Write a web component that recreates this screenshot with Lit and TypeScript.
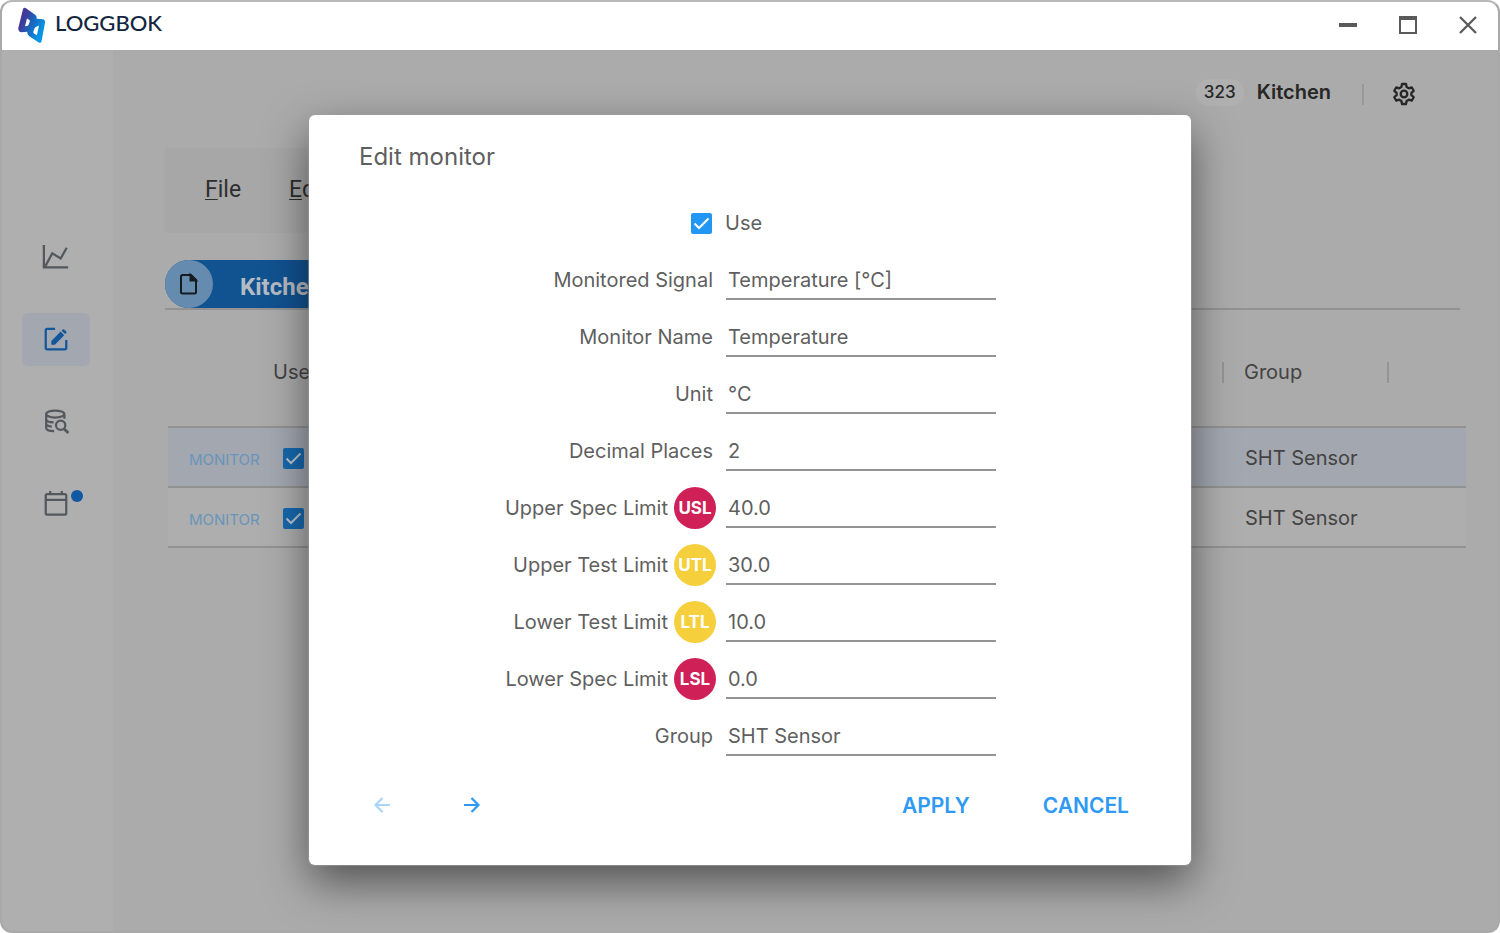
import { LitElement, html, css, svg, nothing } from "lit";
import { customElement, property } from "lit/decorators.js";

interface Field {
  id: string;
  label: string;
  value: string;
  badge?: string;
  tone?: "spec" | "test";
}

const FIELDS: Field[] = [
  { id: "signal", label: "Monitored Signal", value: "Temperature [°C]" },
  { id: "name", label: "Monitor Name", value: "Temperature" },
  { id: "unit", label: "Unit", value: "°C" },
  { id: "decimals", label: "Decimal Places", value: "2" },
  { id: "usl", label: "Upper Spec Limit", value: "40.0", badge: "USL", tone: "spec" },
  { id: "utl", label: "Upper Test Limit", value: "30.0", badge: "UTL", tone: "test" },
  { id: "ltl", label: "Lower Test Limit", value: "10.0", badge: "LTL", tone: "test" },
  { id: "lsl", label: "Lower Spec Limit", value: "0.0", badge: "LSL", tone: "spec" },
  { id: "group", label: "Group", value: "SHT Sensor" },
];

const ROWS = [
  { action: "MONITOR", group: "SHT Sensor", selected: true },
  { action: "MONITOR", group: "SHT Sensor", selected: false },
];

const icons = {
  chart: svg`<path d="M2 1v24h26M3.500 24l7.500-14 9 5.500L26.500 4" />`,
  edit: svg`<path d="M14 3H5.500A1.500 1.500 0 0 0 4 4.500v19A1.500 1.500 0 0 0 5.500 25h19a1.500 1.500 0 0 0 1.500-1.500V15" />
    <path class="solid" d="M10 20v-4L20 6l3.800 3.800L13.800 20zM21 5l1.300-1.300a1 1 0 0 1 1.400 0l2.300 2.300a1 1 0 0 1 0 1.400l-1.300 1.300z" />`,
  search: svg`<path d="M24 11.500V7M4.500 7v14.500c0 1.900 3.500 3.300 8.500 3.400M4.500 12c0 1.800 3.500 3.200 8 3.400M4.500 17c0 1.500 2.500 2.600 6 3" />
    <ellipse cx="14.200" cy="6.500" rx="9.700" ry="3.800" />
    <circle cx="20" cy="18.500" r="5" /><path class="thick" d="M23.600 22.300l4.600 4.600" />`,
  calendar: svg`<rect x="4" y="4.500" width="22" height="22" rx="1.500" /><path d="M4 10.500h22M8.800 1v3.500M21.200 1v3.500" />`,
};

@customElement("check-box")
class CheckBox extends LitElement {
  @property() label = "";
  @property({ type: Boolean }) showLabel = false;

  static styles = css`
    :host { display: inline-flex; }
    .wrap { display: inline-flex; align-items: center; gap: 13px; color: #5f5f5f; font: 400 20px/28px Inter, sans-serif; }
    .box { display: grid; width: 21px; height: 21px; }
    .box > * { grid-area: 1 / 1; }
    input { appearance: none; margin: 0; width: 21px; height: 21px; border-radius: 2px; border: 2px solid var(--check, #2196f3); background: transparent; }
    input:checked { background: var(--check, #2196f3); }
    svg { width: 21px; height: 21px; pointer-events: none; fill: none; stroke: var(--mark, #fff); stroke-width: 2; visibility: hidden; }
    input:checked + svg { visibility: visible; }
  `;

  render() {
    return html`<label class="wrap">
      <span class="box">
        <input type="checkbox" checked aria-label=${this.label} />
        <svg viewBox="0 0 21 21"><path d="M3.500 10.500l4.500 4.500 9.500-9.500" /></svg>
      </span>
      ${this.showLabel ? html`<span>${this.label}</span>` : nothing}
    </label>`;
  }
}

@customElement("side-nav")
class SideNav extends LitElement {
  static styles = css`
    :host { display: block; flex: 0 0 111px; background: #afafaf; }
    nav { display: flex; flex-direction: column; align-items: flex-start; gap: 29px; padding: 181px 0 0 20px; }
    button { display: grid; place-items: center; width: 68px; height: 53px; padding: 0; border: 0; border-radius: 6px; background: none; color: #53585d; position: relative; }
    button.active { background: #a3a7b0; color: #12569c; }
    svg { width: 28px; height: 28px; fill: none; stroke: currentColor; stroke-width: 2.4; }
    .solid { fill: currentColor; stroke: none; }
    .thick { stroke-width: 3; }
    .dot { position: absolute; top: 13px; right: 7px; width: 12px; height: 12px; border-radius: 50%; background: #1058a0; }
  `;

  render() {
    const item = (label: string, icon: unknown, active = false, dot = false) => html`
      <button class=${active ? "active" : ""} aria-label=${label}>
        <svg viewBox="0 0 30 30">${icon}</svg>
        ${dot ? html`<span class="dot"></span>` : nothing}
      </button>`;
    return html`<nav>
      ${item("Chart", icons.chart)} ${item("Edit", icons.edit, true)}
      ${item("Search data", icons.search)} ${item("Calendar", icons.calendar, false, true)}
    </nav>`;
  }
}

@customElement("monitor-dialog")
class MonitorDialog extends LitElement {
  static styles = css`
    :host { display: block; width: min(882px, 92%); }
    .dialog { box-sizing: border-box; padding: 26px 0 40px; border-radius: 6px; background: #fff;
      box-shadow: 0 0 1px 1px rgba(160, 160, 160, .6), 0 17px 44px rgba(0, 0, 0, .52); font-family: Inter, sans-serif; color: #5f5f5f; }
    h1 { margin: 0 50px 22px; font-size: 24px; line-height: 32px; font-weight: 400; }
    .row { display: grid; grid-template-columns: minmax(0, 11fr) 270px minmax(0, 5fr); column-gap: 10px; align-items: center; height: 57px; }
    .use { grid-column: 1 / 3; padding-left: 382px; }
    .label { display: flex; align-items: center; justify-content: flex-end; gap: 6px; font-size: 20px; line-height: 28px; padding-right: 3px; }
    .label.with-badge { padding-right: 0; }
    .badge { display: grid; place-items: center; width: 42px; height: 42px; border-radius: 50%; color: #fff; font-size: 17px; font-weight: 700; }
    .spec { background: #d02058; }
    .test { background: #f5d03c; }
    input { box-sizing: border-box; width: 100%; height: 40px; padding: 2px 0 0 2px; border: 0; border-bottom: 2px solid #949494; border-radius: 0; outline: 0; background: none; color: inherit; font: 400 20px/28px Inter, sans-serif; }
    .actions { display: flex; align-items: center; height: 40px; margin-top: 20px; padding: 0 46px 0 53px; }
    button { padding: 0; border: 0; background: none; color: #2e9af3; height: 40px; font: 600 21px/28px Inter, sans-serif; }
    .arrow { width: 40px; margin-right: 50px; }
    .arrow:disabled { opacity: .4; }
    .arrow svg { display: block; width: 24px; height: 24px; margin: auto; fill: none; stroke: currentColor; stroke-width: 2.2; }
    .text { padding: 2px 16px 0; }
    .text + .text { margin-left: 41px; }
    .spacer { flex: 1; }
  `;

  render() {
    return html`<section class="dialog" role="dialog" aria-labelledby="title">
      <h1 id="title">Edit monitor</h1>
      <div class="row"><check-box class="use" label="Use" showLabel></check-box></div>
      ${FIELDS.map((f) => html`<div class="row">
        <label class="label ${f.badge ? "with-badge" : ""}" for=${f.id}>
          ${f.label}${f.badge ? html`<span class="badge ${f.tone}">${f.badge}</span>` : nothing}
        </label>
        <input id=${f.id} type="text" .value=${f.value} />
      </div>`)}
      <div class="actions">
        <button class="arrow" disabled aria-label="Previous"><svg viewBox="0 0 24 24"><path d="M20 12H5.500M12.500 5L5.500 12l7 7" /></svg></button>
        <button class="arrow" aria-label="Next"><svg viewBox="0 0 24 24"><path d="M4 12h14.500M11.500 5l7 7-7 7" /></svg></button>
        <span class="spacer"></span>
        <button class="text">APPLY</button>
        <button class="text">CANCEL</button>
      </div>
    </section>`;
  }
}

@customElement("app-root")
class AppRoot extends LitElement {
  static styles = css`
    :host { display: block; font-family: Inter, sans-serif; color: #434343; }
    .window { box-sizing: border-box; display: flex; flex-direction: column; min-height: 100vh; border: 2px solid #a9a9a9; border-top-color: #b8b8b8; border-radius: 12px; overflow: hidden; background: #ababab; }
    .titlebar { display: flex; align-items: center; height: 48px; padding: 0 18px 0 15px; background: #fff; }
    .logo { width: 30px; height: 38px; }
    .brand { margin-left: 8px; flex: 1; color: #14263f; font: 500 22px/28px Lato, sans-serif; padding-bottom: 6px; }
    .controls { display: flex; gap: 36px; padding-bottom: 2px; }
    .controls button { padding: 0; border: 0; background: none; width: 24px; height: 24px; }
    .controls svg { display: block; width: 24px; height: 24px; fill: none; stroke: #5b5b5b; }
    .body { position: relative; display: flex; flex: 1; }
    .main { flex: 1; min-width: 0; padding: 24px 32px 0 52px; }
    .header { display: flex; align-items: center; justify-content: flex-end; height: 36px; padding-right: 50px; color: #262626; }
    .count { width: 48px; border-radius: 14px; background: #b0b0b0; text-align: center; font-size: 17px; line-height: 27px; font-weight: 500; }
    .place { margin: 0 31px 0 13px; font-size: 20px; line-height: 28px; font-weight: 600; }
    .rule { width: 2px; height: 21px; background: #999; margin: 4px 28px 0 0; }
    .gear { padding: 0; border: 0; background: none; width: 24px; height: 24px; color: inherit; margin-top: 4px; }
    .gear svg { display: block; width: 24px; height: 24px; fill: none; stroke: currentColor; stroke-width: 2.3; stroke-linejoin: round; }
    .menu { display: flex; gap: 48px; align-items: center; width: 79%; height: 85px; margin-top: 38px; padding-left: 40px; box-sizing: border-box; background: #a7a7a7; }
    .menu a { color: #2e2e2e; font: 400 23px/28px Roboto, sans-serif; text-decoration: none; padding-bottom: 1px; }
    .key { text-decoration: underline; text-decoration-thickness: 1px; text-underline-offset: 2px; }
    .tabs { margin: 27px 6px 0 0; border-bottom: 2px solid #929292; }
    .tab { display: flex; align-items: center; width: 260px; height: 48px; padding: 0; border: 0; border-radius: 24px; background: #115291; color: #b5bbc2; font: 700 24px/28px Roboto, sans-serif; }
    .tab-icon { display: grid; place-items: center; width: 48px; height: 48px; border-radius: 50%; background: #658caf; margin-right: 27px; }
    .tab-icon svg { width: 24px; height: 24px; fill: none; stroke: #161b20; stroke-width: 2; }
    .tab-icon .solid { fill: #161b20; }
    .tab-text { padding-top: 6px; }
    table { width: calc(100% - 3px); margin-left: 3px; border-collapse: collapse; table-layout: fixed; }
    .col-action { width: 105px; }
    .col-group { width: 244px; }
    th { height: 117px; padding: 9px 0 0; box-sizing: border-box; text-align: left; font-size: 20px; line-height: 21px; font-weight: 400; vertical-align: middle; }
    .bounded { display: block; width: 143px; padding-left: 20px; border: solid #949494; border-width: 0 2px; }
    tr { border-bottom: 2px solid #929292; }
    td { height: 60px; padding: 2px 0 0; box-sizing: border-box; font-size: 20px; line-height: 28px; background: #aeaeae; vertical-align: middle; }
    .selected td { background: #a3a7b0; }
    .monitor { padding: 0 0 0 21px; border: 0; background: none; color: #6895bb; font: 400 15px/24px Inter, sans-serif; }
    td.check { padding: 0 0 0 10px; }
    check-box { --check: #1668ae; --mark: #b9c3cc; vertical-align: middle; }
    td.group { padding-left: 23px; }
    .overlay { position: absolute; inset: 0; display: flex; align-items: center; justify-content: center; padding-bottom: 2px; }
  `;

  render() {
    return html`<div class="window">
      <header class="titlebar">
        <svg class="logo" viewBox="0 0 30 38" aria-hidden="true">
          <defs><linearGradient id="shade" x1="0" y1="0.2" x2="1" y2=".8">
            <stop offset=".2" stop-color="#433798" /><stop offset=".45" stop-color="#1c62bb" /><stop offset=".85" stop-color="#0596e6" />
          </linearGradient></defs>
          <path fill="url(#shade)" fill-rule="evenodd" d="M6 2Q6.800 .2 9 1.200L18.500 8Q19.800 9 19.800 11.800L26 12.300Q28.400 12.800 28 16L24.500 34.300Q24 36.500 21.800 35.600L12 29Q10 27.500 10.300 24.700L4 25.300Q1 24.500 1.300 21ZM10 11.500L8 19.200L10.300 18.900Q11.500 18.500 11.900 17L12.800 14.500Q13 13.500 12.400 13.100ZM22 18.500L18.900 20Q17.600 20.800 17.200 22.300L16.400 24.800Q16.200 25.900 17 26.500L19.900 28.200Z" />
        </svg>
        <span class="brand">LOGGBOK</span>
        <div class="controls">
          <button aria-label="Minimize"><svg viewBox="0 0 24 24"><path stroke-width="4" d="M3 12h18" /></svg></button>
          <button aria-label="Maximize"><svg viewBox="0 0 24 24"><path stroke-width="2" d="M4 4h16v16H4z" /><path stroke-width="4" d="M3 5h18" /></svg></button>
          <button aria-label="Close"><svg viewBox="0 0 24 24"><path stroke-width="2.300" d="M4 4l16 16M20 4L4 20" /></svg></button>
        </div>
      </header>
      <div class="body">
        <side-nav></side-nav>
        <main class="main">
          <div class="header">
            <span class="count">323</span><span class="place">Kitchen</span><span class="rule"></span>
            <button class="gear" aria-label="Settings"><svg viewBox="0 0 24 24">
              <path d="M10 2h4l.6 3 2.200 1.300 2.900-1 2 3.500-2.300 2v2.400l2.300 2-2 3.500-2.900-1-2.200 1.300-.6 3h-4l-.6-3-2.200-1.300-2.900 1-2-3.500 2.300-2v-2.400l-2.300-2 2-3.500 2.900 1L9.400 5z" />
              <circle cx="12" cy="12" r="3.300" /></svg></button>
          </div>
          <nav class="menu">
            <a href="#file"><span class="key">F</span>ile</a><a href="#edit"><span class="key">E</span>dit</a>
          </nav>
          <div class="tabs">
            <button class="tab">
              <span class="tab-icon"><svg viewBox="0 0 24 24"><path d="M5.500 3h8.500l5 5v12a1.500 1.500 0 0 1-1.500 1.500h-12A1.500 1.500 0 0 1 4 20V4.500A1.500 1.500 0 0 1 5.500 3z" /><path class="solid" d="M13.500 3v5.500H19z" /></svg></span>
              <span class="tab-text">Kitchen</span>
            </button>
          </div>
          <table>
            <colgroup><col class="col-action" /><col /><col class="col-group" /></colgroup>
            <thead><tr><th></th><th>Use</th><th><span class="bounded">Group</span></th></tr></thead>
            <tbody>
              ${ROWS.map((r) => html`<tr class=${r.selected ? "selected" : ""}>
                <td><button class="monitor">${r.action}</button></td>
                <td class="check"><check-box label="Use"></check-box></td>
                <td class="group">${r.group}</td>
              </tr>`)}
            </tbody>
          </table>
        </main>
        <div class="overlay"><monitor-dialog></monitor-dialog></div>
      </div>
    </div>`;
  }
}
